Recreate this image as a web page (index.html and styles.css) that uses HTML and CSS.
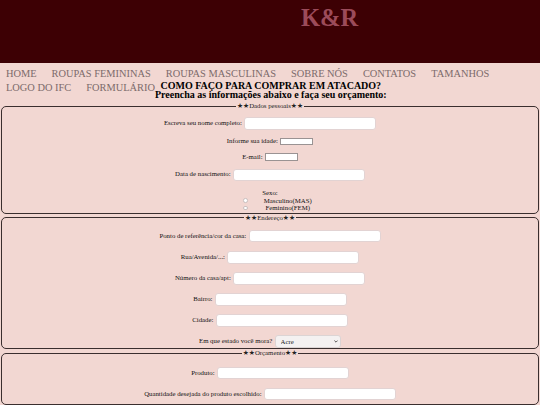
FILE: index.html
```html
<!DOCTYPE html>
<html lang="pt-BR">
<head>
<meta charset="utf-8">
<title>K&amp;R - Formulário</title>
<link rel="stylesheet" href="styles.css">
</head>
<body>
<header class="site-header">
  <h1 class="brand">K&amp;R</h1>
</header>
<nav class="menu menu-top">
  <a href="#">HOME</a>
  <a href="#">ROUPAS FEMININAS</a>
  <a href="#">ROUPAS MASCULINAS</a>
  <a href="#">SOBRE NÓS</a>
  <a href="#">CONTATOS</a>
  <a href="#">TAMANHOS</a>
</nav>
<div class="menu-row">
  <nav class="menu">
    <a href="#">LOGO DO IFC</a>
    <a href="#">FORMULÁRIO</a>
  </nav>
  <div class="titles">
    <h2 class="title">COMO FAÇO PARA COMPRAR EM ATACADO?</h2>
    <h3 class="subtitle">Preencha as informações abaixo e faça seu orçamento:</h3>
  </div>
  <div></div>
</div>
<form class="order-form">
  <fieldset class="group group-personal">
    <legend class="group-title">★★Dados pessoais★★</legend>
    <div class="field"><label>Escreva seu nome completo:</label><input class="text" type="text"></div>
    <div class="field field-short"><label>Informe sua idade:</label><input class="text-small" type="text"></div>
    <div class="field field-short"><label>E-mail:</label><input class="text-small" type="text"></div>
    <div class="field"><label>Data de nascimento:</label><input class="text" type="text"></div>
    <div class="sex">
      <div class="sex-title">Sexo:</div>
      <div class="sex-options">
        <input class="radio" type="radio" name="sexo"><span class="sex-label">Masculino(MAS)</span>
        <input class="radio" type="radio" name="sexo"><span class="sex-label">Feminino(FEM)</span>
      </div>
    </div>
  </fieldset>
  <fieldset class="group group-wide">
    <legend class="group-title">★★Endereço★★</legend>
    <div class="field"><label>Ponto de referência/cor da casa:</label><input class="text" type="text"></div>
    <div class="field"><label>Rua/Avenida/...:</label><input class="text" type="text"></div>
    <div class="field"><label>Número da casa/apt:</label><input class="text" type="text"></div>
    <div class="field"><label>Bairro:</label><input class="text" type="text"></div>
    <div class="field"><label>Cidade:</label><input class="text" type="text"></div>
    <div class="field"><label>Em que estado você mora?</label><span class="select-wrap"><select class="select"><option>Acre</option><option>Alagoas</option><option>Amapá</option></select><svg class="chevron" viewBox="0 0 6 4" width="4" height="3"><path d="M0.6 0.6 L3 3 L5.4 0.6" fill="none" stroke="#333" stroke-width="1.2"/></svg></span></div>
  </fieldset>
  <fieldset class="group group-budget">
    <legend class="group-title">★★Orçamento★★</legend>
    <div class="field"><label>Produto:</label><input class="text" type="text"></div>
    <div class="field"><label>Quantidade desejada do produto escolhido:</label><input class="text" type="text"></div>
  </fieldset>
</form>
</body>
</html>
```

FILE: styles.css
```css
* {
  box-sizing: border-box;
}

body {
  margin: 0;
  background: #f2d7d2;
  font-family: "Liberation Serif", "DejaVu Serif", serif;
  color: #222;
}

.site-header {
  height: 63px;
  background: #3d0004;
  padding-top: 3.7px;
}

.brand {
  margin: 0 0 0 301px;
  font-size: 24.5px;
  line-height: 28px;
  font-weight: bold;
  color: #9c4b5a;
}

.menu {
  display: flex;
  gap: 15px;
  font-size: 10.4px;
  line-height: 14px;
}

.menu a {
  color: #7c6b6b;
  text-decoration: none;
  white-space: nowrap;
}

.menu-top {
  padding: 3.8px 6px 0;
}

.menu-row {
  display: grid;
  grid-template-columns: 1fr auto 1fr;
  padding: 0 6px;
}

.titles {
  text-align: center;
  color: #000;
}

.title,
.subtitle {
  margin: 0;
  font-size: 10px;
  line-height: 9.5px;
  font-weight: bold;
  white-space: nowrap;
}

.order-form {
  margin: 2px 0 0;
}

.group {
  margin: 0 1px;
  border: 1px solid #3a2e2e;
  border-radius: 5px;
  display: flex;
  flex-direction: column;
  min-width: 0;
}

.group-personal {
  gap: 8px;
  padding: 7px 0 1px;
}

.group-wide {
  gap: 8.7px;
  padding: 8px 0 0.5px;
}

.group-budget {
  gap: 8.7px;
  padding: 9px 0 4px;
}

.group-title {
  margin: 0 auto;
  padding: 0 1px;
  font-family: "Liberation Serif", "DejaVu Sans", serif;
  font-size: 6.8px;
  line-height: 8.5px;
  color: #222;
}

.field {
  display: flex;
  justify-content: center;
  align-items: center;
  gap: 2.3px;
  height: 12.4px;
}

.field-short {
  height: 7.5px;
}

.field label {
  font-size: 6.8px;
  line-height: 1;
  color: #111;
  white-space: nowrap;
}

.text {
  width: 132px;
  height: 12.4px;
  margin: 0;
  padding: 0 3px;
  background: #fff;
  border: 1px solid #e2d3d3;
  border-radius: 3px;
  font: 6.8px "Liberation Serif", serif;
}

.text-small {
  width: 33px;
  height: 7.5px;
  margin: 0;
  padding: 0 2px;
  background: #fff;
  border: 1px solid #9a9393;
  border-radius: 0;
  font: 5px "Liberation Serif", serif;
}

.sex {
  text-align: center;
  font-size: 6.8px;
  line-height: 7.5px;
  color: #111;
}

.sex-options {
  display: inline-grid;
  grid-template-columns: 4.5px 80px;
  grid-auto-rows: 7.5px;
  align-items: center;
  margin-left: 31px;
  text-align: center;
}

.radio {
  appearance: none;
  -webkit-appearance: none;
  width: 4.5px;
  height: 4.5px;
  margin: 0;
  border: 0.6px solid #c9bfbf;
  border-radius: 50%;
  background: #fff;
}

.sex-label {
  white-space: nowrap;
}

.select-wrap {
  position: relative;
  display: block;
  height: 12.4px;
}

.select {
  appearance: none;
  -webkit-appearance: none;
  display: block;
  width: 66.5px;
  height: 12.4px;
  margin: 0;
  padding: 0 0 0 5px;
  background: #f4f1f1;
  border: 1px solid #dcd4d4;
  border-radius: 3px;
  font: 6.8px "Liberation Serif", serif;
  color: #222;
}

.chevron {
  position: absolute;
  right: 3px;
  top: 4.7px;
}
```
